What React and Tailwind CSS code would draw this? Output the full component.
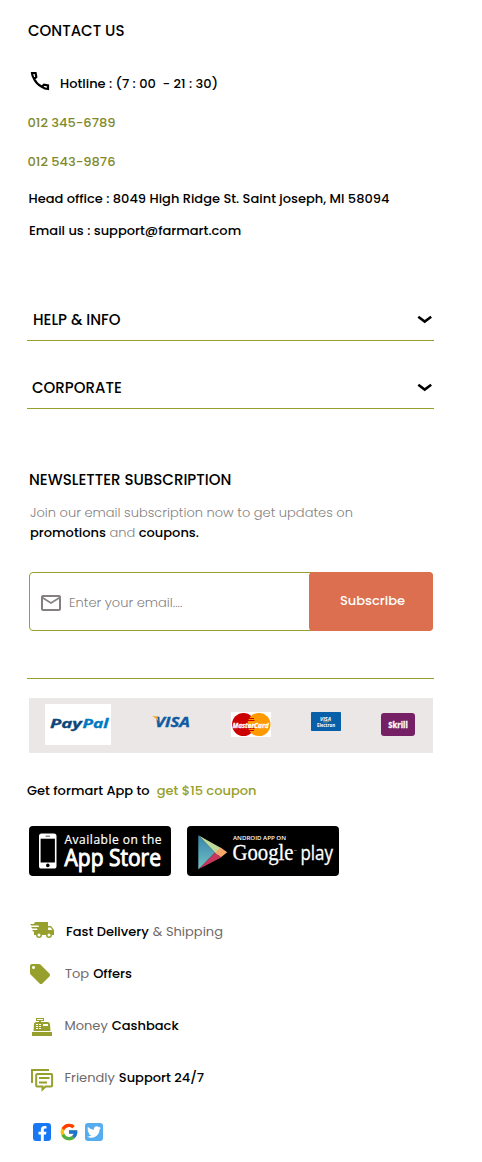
import React from "react";
import { FcGoogle } from "react-icons/fc";
import { FaTwitter, FaFacebookF } from "react-icons/fa";
import { MdLocalOffer, MdMailOutline } from "react-icons/md";

const T = ({ className = "", children }) => (
  <span className={`whitespace-pre ${className}`}>{children}</span>
);

const Phone = () => (
  <svg className="size-6 overflow-visible" viewBox="0 0 24 24" fill="none" stroke="#000" strokeWidth="2.2">
    <path d="M4 4h3.600l.7 4-2.100 2.200C4.900 8.200 4.100 6.200 4 4ZM20 20v-3.600l-4-.7-2.200 2.100c2 1.300 4 2.100 6.200 2.200ZM6.200 10.200c1.700 3.300 4.300 5.900 7.600 7.600" />
  </svg>
);

const Chevron = () => (
  <svg className="h-[9px] w-[16px]" viewBox="0 0 16 9" fill="none">
    <path d="M1.300 1.800 7.700 6.600 14.200 1.800" stroke="#000" strokeWidth="2.500" />
  </svg>
);

const PayPal = () => (
  <svg className="h-[41px] w-[66px] bg-white" viewBox="0 0 66 41">
    <g fontFamily="Open Sans, sans-serif" fontWeight="700" fontStyle="italic" fontSize="13" strokeWidth=".3">
      <text x="5" y="23.500" fill="#0d4679" stroke="#0d4679" textLength="32" lengthAdjust="spacingAndGlyphs">Pay</text>
      <text x="37.500" y="23.500" fill="#0079c1" stroke="#0079c1" textLength="26" lengthAdjust="spacingAndGlyphs">Pal</text>
    </g>
  </svg>
);

const Visa = () => (
  <svg className="h-[14px] w-[40px] overflow-visible" viewBox="0 0 40 14">
    <text x="3" y="10" fill="#0e5aa2" stroke="#0e5aa2" strokeWidth=".4" fontFamily="Open Sans, sans-serif" fontWeight="700" fontStyle="italic" fontSize="15" textLength="35" lengthAdjust="spacingAndGlyphs">VISA</text>
    <path d="M0-.8h5.200L6.600 4.300Q4 .7 0-.8Z" fill="#f7a823" />
  </svg>
);

const MasterCard = () => (
  <svg className="h-[25px] w-[40px] overflow-visible bg-white" viewBox="0 0 40 25">
    <circle cx="12.500" cy="12.500" r="11.500" fill="#cc0000" />
    <circle cx="28" cy="12.500" r="11.500" fill="#ff9900" />
    <path d="M17 6.500h6M16.500 8.500h7M16.500 16.500h7M17 18.500h6" stroke="#cc0000" strokeWidth="1" />
    <text x="1.500" y="15.500" fill="#fff" stroke="#fff" strokeWidth=".3" fontFamily="Open Sans, sans-serif" fontWeight="700" fontStyle="italic" fontSize="7.500" textLength="36" lengthAdjust="spacingAndGlyphs">MasterCard</text>
  </svg>
);

const Electron = () => (
  <svg className="h-[19px] w-[30px]" viewBox="0 0 30 19">
    <rect width="30" height="19" rx=".8" fill="#0860a8" />
    <text x="9" y="8.500" fill="#fff" fontFamily="Open Sans, sans-serif" fontWeight="700" fontStyle="italic" fontSize="5.500" textLength="11" lengthAdjust="spacingAndGlyphs">VISA</text>
    <path d="M12 10q4 .6 8-1.600" stroke="#c9b26a" strokeWidth=".7" fill="none" />
    <text x="6" y="15" fill="#fff" fontFamily="Open Sans, sans-serif" fontWeight="700" fontSize="4.600" textLength="18" lengthAdjust="spacingAndGlyphs">Electron</text>
  </svg>
);

const Skrill = () => (
  <svg className="h-[23px] w-[34px]" viewBox="0 0 34 23">
    <rect width="34" height="23" rx="3" fill="#752064" />
    <text x="7.300" y="15" fill="#fff" stroke="#fff" strokeWidth=".3" fontFamily="Open Sans, sans-serif" fontWeight="700" fontSize="8.500" textLength="19.500" lengthAdjust="spacingAndGlyphs">Skrill</text>
  </svg>
);

const AppStore = () => (
  <svg className="h-[50px] w-[142px]" viewBox="0 0 142 50">
    <rect width="142" height="50" rx="4" fill="#000" />
    <rect x="10" y="7.500" width="17.500" height="35" rx="2.600" fill="#fff" />
    <rect x="11.600" y="12.700" width="14.300" height="23.800" fill="#000" />
    <path d="M16.500 10.200h4.500" stroke="#555" strokeWidth="1" />
    <circle cx="18.800" cy="39.400" r="1.800" fill="#000" />
    <text x="35.500" y="17.500" fill="#fff" stroke="#fff" strokeWidth=".2" fontFamily="Open Sans, sans-serif" fontSize="12" textLength="97" lengthAdjust="spacing">Available on the</text>
    <text x="35.500" y="39.500" fill="#fff" stroke="#fff" strokeWidth="1" fontFamily="Open Sans, sans-serif" fontWeight="400" fontSize="23.500" textLength="96.500" lengthAdjust="spacingAndGlyphs">App Store</text>
  </svg>
);

const GooglePlay = () => (
  <svg className="h-[50px] w-[152px]" viewBox="0 0 152 50">
    <defs>
      <linearGradient id="playBlue" x1="0" y1="0" x2="0" y2="1">
        <stop offset="0" stopColor="#3684ab" />
        <stop offset="1" stopColor="#73c3c5" />
      </linearGradient>
    </defs>
    <rect width="152" height="50" rx="4" fill="#000" />
    <path d="M11.300 9.300 34 22 30.500 29.300Z" fill="#bdd99b" />
    <path d="M11.300 43.300 28 26.500 34.300 31.500Z" fill="#c6375c" />
    <path d="M33.600 21.500 40.200 26.300 34 31.300 28 26.500Z" fill="#f6a76b" />
    <path d="M11.300 9.300 28 26.500 11.300 43.300Z" fill="url(#playBlue)" />
    <text x="46" y="14" fill="#fff" fontFamily="Open Sans, sans-serif" fontWeight="600" fontSize="6" textLength="53" lengthAdjust="spacingAndGlyphs">ANDROID APP ON</text>
    <text x="45.500" y="33.500" fill="#fff" stroke="#fff" strokeWidth=".3" fontFamily="Liberation Serif, serif" fontSize="23.500" textLength="61" lengthAdjust="spacingAndGlyphs">Google</text>
    <text x="107" y="24.500" fill="#fff" fontFamily="Open Sans, sans-serif" fontSize="2">TM</text>
    <text x="113.500" y="33.500" fill="#fff" stroke="#fff" strokeWidth=".3" fontFamily="Open Sans, sans-serif" fontSize="19.500" textLength="32.500" lengthAdjust="spacingAndGlyphs">play</text>
  </svg>
);

const Truck = () => (
  <svg className="size-6" viewBox="0 0 24 24" fill="#97a02c">
    <path d="M3 13.5 2.25 12H7.5l-.6-1.5H2L1.25 9h7.8l-.6-1.5H1.11L.25 6H4a2 2 0 0 1 2-2h12v4h3l3 4v5h-2a3 3 0 0 1-3 3 3 3 0 0 1-3-3h-4a3 3 0 0 1-3 3 3 3 0 0 1-3-3H4v-3.5H3m16 5a1.5 1.5 0 0 0 1.5-1.5 1.5 1.5 0 0 0-1.5-1.5 1.5 1.5 0 0 0-1.5 1.5 1.5 1.5 0 0 0 1.5 1.5m1.5-9H18V12h4.46L20.5 9.5M9 18.5a1.5 1.5 0 0 0 1.5-1.5A1.5 1.5 0 0 0 9 15.5 1.5 1.5 0 0 0 7.5 17 1.5 1.5 0 0 0 9 18.5z" />
  </svg>
);

const Register = () => (
  <svg className="size-6" viewBox="0 0 24 24" fill="#97a02c">
    <path d="M2 17h20v4H2v-4M6.25 7H9V6H6V3h8v3h-3v1h6.8c1 0 2 1 2.2 2l.5 7h-17L4 9c.05-1 1.05-2 2.25-2M13 9v2h5V9h-5M6 9v1h2V9H6m3 0v1h2V9H9m-3 2v1h2v-1H6m3 0v1h2v-1H9m-3 2v1h2v-1H6m3 0v1h2v-1H9M7 4v1h6V4H7z" />
  </svg>
);

const Chat = () => (
  <svg className="size-6 overflow-visible" viewBox="0 0 24 24" fill="none" stroke="#97a02c" strokeWidth="2">
    <path d="M1 16V3h17" />
    <path d="M6.200 7h13.900a1 1 0 0 1 1 1v10.500a1 1 0 0 1-1 1h-5.500L11.500 22.500v-3H6.200a1 1 0 0 1-1-1V8a1 1 0 0 1 1-1Z" />
    <path d="M8 11h10.500M8 15.600h8" />
  </svg>
);

const Feature = ({ className, icon, children }) => (
  <div className={`flex h-6 items-start leading-5 ${className}`}>{icon}{children}</div>
);

export default function App() {
  return (
    <main className="h-[1162px] w-[482px] bg-white pt-[21px] font-['Poppins','Inter',sans-serif] text-[13px] leading-5 font-medium text-black">
      <section className="flex flex-col items-start pl-[28px]">
        <h2 className="text-[15px] leading-5 font-medium"><T>CONTACT US</T></h2>
        <div className="mt-[28px] flex h-6 items-start">
          <Phone />
          <T className="mt-[5px] ml-[8px]">{"Hotline : (7 : 00  - 21 : 30)"}</T>
        </div>
        <div className="-ml-[0.5px] mt-[20px] text-[#808a2b]"><T>012 345-6789</T></div>
        <div className="-ml-[0.5px] mt-[19px] text-[#808a2b]"><T>012 543-9876</T></div>
        <div className="mt-[17px] ml-[0.5px]"><T>Head office : 8049 High Ridge St. Saint joseph, MI 58094</T></div>
        <div className="mt-[12px] ml-px"><T>Email us : support@farmart.com</T></div>
      </section>

      <nav className="mt-[69px] ml-[27px] w-[407px] text-[15px]">
        <div className="flex h-[31px] items-start justify-between border-b border-[#97a02c] pr-px pl-[6px]">
          <T>{"HELP & INFO"}</T><span className="mt-[5px]"><Chevron /></span>
        </div>
        <div className="mt-[37px] flex h-[31px] items-start justify-between border-b border-[#97a02c] pr-px pl-[5px]">
          <T>CORPORATE</T><span className="mt-[5px]"><Chevron /></span>
        </div>
      </nav>

      <section className="mt-[61px] ml-[29px] w-[404px]">
        <h2 className="text-[15px] leading-5 font-medium"><T>NEWSLETTER SUBSCRIPTION</T></h2>
        <p className="mt-[13px] pl-px font-light text-[#857f7f]">
          <T>Join our email subscription now to get updates on</T><br />
          <T className="font-medium text-black">promotions</T> <T>and</T> <T className="font-medium text-black">coupons.</T>
        </p>
        <form className="mt-[29px] flex h-[59px] rounded-[4px] border border-[#97a02c]">
          <div className="flex flex-1 items-start pt-[18px] pl-[9px]">
            <MdMailOutline className="size-6 text-[#857f7f]" />
            <T className="mt-[2px] ml-[6px] font-light text-[#857f7f]">Enter your email....</T>
          </div>
          <button type="button" className="-m-px w-[124px] rounded-[4px] bg-[#db6f4f] pb-px pl-[3px] text-white"><T>Subscribe</T></button>
        </form>
      </section>

      <div className="mt-[47px] ml-[27px] h-px w-[407px] bg-[#97a02c]" />
      <div className="mt-[19px] ml-[29px] flex h-[55px] w-[404px] items-start bg-[#ebe7e6] pl-[16px]">
        <div className="mt-[6px]"><PayPal /></div>
        <div className="mt-[19px] ml-[41px]"><Visa /></div>
        <div className="mt-[14px] ml-[39px]"><MasterCard /></div>
        <div className="mt-[14px] ml-[40px]"><Electron /></div>
        <div className="mt-[15px] ml-[40px]"><Skrill /></div>
      </div>

      <div className="mt-[28px] ml-[27px] flex gap-[7px]">
        <T>Get formart App to</T><T className="text-[#97a02c]">get $15 coupon</T>
      </div>
      <div className="mt-[25px] ml-[29px] flex gap-4"><AppStore /><GooglePlay /></div>

      <section className="ml-[28px]">
        <Feature className="mt-[42px] ml-[2px]" icon={<Truck />}><T className="mt-[4px] ml-[12px]">Fast Delivery</T><T className="mt-[4px] ml-[4px] font-normal text-[#6f6868]">{"& Shipping"}</T></Feature>
        <Feature className="mt-[20px]" icon={<MdLocalOffer className="size-6 text-[#97a02c]" />}><T className="mt-[2px] ml-[13px] font-normal text-[#6f6868]">Top</T><T className="mt-[2px] ml-[4px]">Offers</T></Feature>
        <Feature className="mt-[29px] ml-[2px]" icon={<Register />}><T className="mt-px ml-[10.5px] font-normal text-[#6f6868]">Money</T><T className="mt-px ml-[4px]">Cashback</T></Feature>
        <Feature className="mt-[28px] ml-[3px]" icon={<Chat />}><T className="mt-px ml-[9.5px] font-normal text-[#6f6868]">Friendly</T><T className="mt-px ml-[4px]">Support 24/7</T></Feature>
        <div className="mt-[31px] ml-[5px] flex items-center">
          <span className="flex size-[18px] items-end justify-center overflow-hidden rounded-[3px] bg-[#1877f2]"><FaFacebookF className="size-[15px] text-white" /></span>
          <FcGoogle className="ml-[8px] size-[20px]" />
          <span className="ml-[6px] flex size-[18px] items-center justify-center rounded-[3px] bg-[#55acee]"><FaTwitter className="size-[14px] text-white" /></span>
        </div>
      </section>
    </main>
  );
}
